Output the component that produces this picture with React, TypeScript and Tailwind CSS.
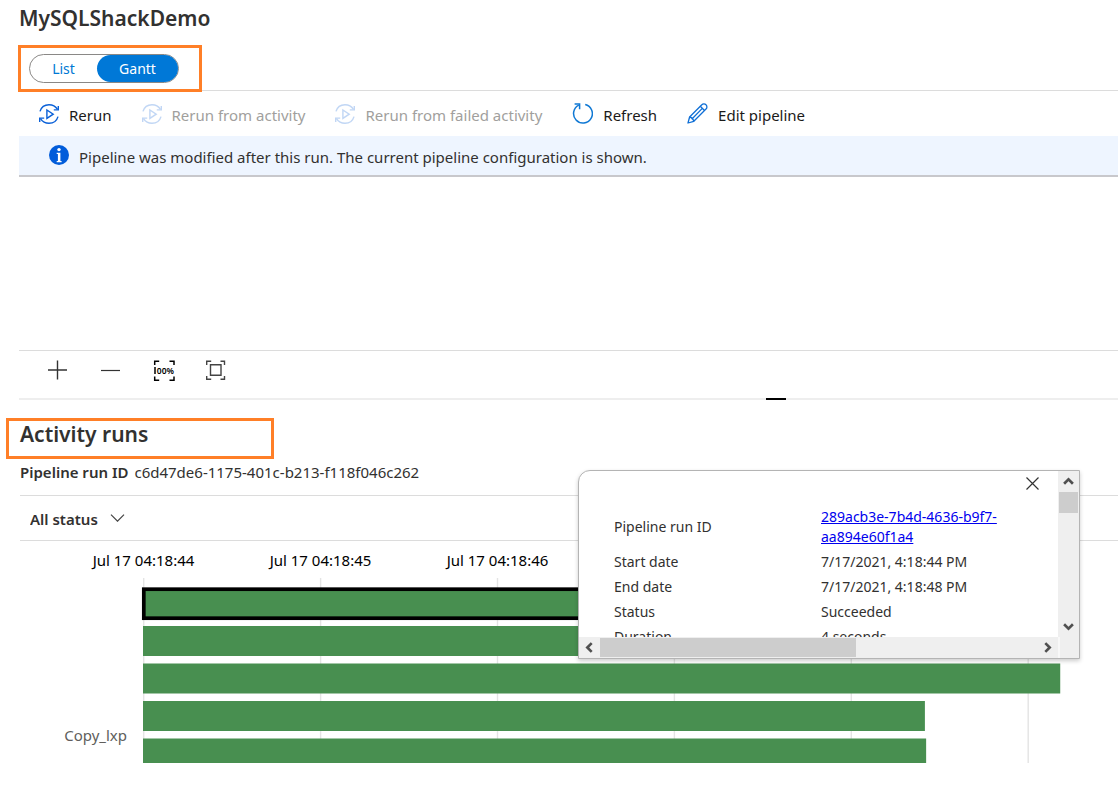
import React from "react";

const SECOND = 176.9;
const CHART_HEIGHT = 185;

const bars = [
  { y: 10, seconds: 4.9 },
  { y: 48, seconds: 4.9 },
  { y: 85.5, seconds: 5.185 },
  { y: 123, seconds: 4.42 },
  { y: 160.5, seconds: 4.427 },
];

const ticks = ["Jul 17 04:18:44", "Jul 17 04:18:45", "Jul 17 04:18:46"];

const details = [
  ["Start date", "7/17/2021, 4:18:44 PM"],
  ["End date", "7/17/2021, 4:18:48 PM"],
  ["Status", "Succeeded"],
  ["Duration", "4 seconds"],
];

function RerunIcon() {
  return (
    <svg className="size-5 shrink-0" viewBox="0 0 20 20" fill="none" stroke="#0b61d8" strokeWidth="1.4" aria-hidden="true">
      <path d="M1 7.400C2.200 3.300 5.900.7 10 .7c3.600 0 6.700 1.800 8.500 4.700" />
      <path d="M19.300 1.900v4h-4.500" />
      <path d="M19 12.600c-1.200 4.100-4.900 6.700-9 6.700-3.600 0-6.700-1.800-8.500-4.700" />
      <path d="M.7 18.100v-4h4.500" />
      <path d="M7.900 6v8.400l6.300-4.200z" />
    </svg>
  );
}

function RefreshIcon() {
  return (
    <svg className="size-[21px] shrink-0" viewBox="0 0 21 21" fill="none" stroke="#0f78d4" strokeWidth="1.5" aria-hidden="true">
      <path d="M13.200 1.500A9.400 9.400 0 1 1 6.800 2.200" />
      <path d="M2.600 1h5v5.200" />
    </svg>
  );
}

function PencilIcon() {
  return (
    <svg className="size-[21px] shrink-0" viewBox="0 0 21 21" fill="none" stroke="#0f6fd6" strokeWidth="1.3" strokeLinejoin="round" aria-hidden="true">
      <path d="M1 20l1.600-6L14.800 1.800a2.900 2.900 0 0 1 4.200 0 2.900 2.900 0 0 1 0 4.200L6.800 18.300z" />
      <path d="M13.300 3.300l4.200 4.200M2.600 14c2 .3 3.600 1.900 4.200 4.300M4.700 16.200L15.300 5.400" />
    </svg>
  );
}

function ToolButton({ icon, label, disabled }: { icon: React.ReactNode; label: string; disabled?: boolean }) {
  return (
    <button type="button" disabled={disabled} className="flex items-center gap-2.5 text-[15px] text-[#1b1a19] disabled:text-[#a19f9d] disabled:[&>svg]:opacity-25">
      {icon}
      <span className="whitespace-nowrap pt-0.5">{label}</span>
    </button>
  );
}

function ScrollArrow({ label, d }: { label: string; d: string }) {
  return (
    <button type="button" aria-label={label} className="grid size-[21px] shrink-0 place-items-center">
      <svg className="size-[11px]" viewBox="0 0 10 10" fill="none" stroke="#505050" strokeWidth="2.4" aria-hidden="true">
        <path d={d} />
      </svg>
    </button>
  );
}

function DetailsPopup() {
  return (
    <section aria-label="Run details" className="absolute top-[470px] left-[578px] grid h-[189px] w-[502px] grid-cols-[1fr_21px] grid-rows-[1fr_21px] overflow-hidden rounded-tl-xl border border-[#b4b4b4] bg-white shadow-[0_2px_4px_rgba(0,0,0,0.2)]">
      <div className="min-h-0 overflow-hidden pl-[35px] text-sm leading-5 text-[#323130]">
        <div className="flex h-[30px] items-end justify-end pr-[19px] pb-[11px]">
          <button type="button" aria-label="Close" className="block">
            <svg className="block size-[13px]" viewBox="0 0 13 13" fill="none" stroke="#333" strokeWidth="1.2" aria-hidden="true">
              <path d="M.5.5l12 12M12.500.5l-12 12" />
            </svg>
          </button>
        </div>
        <dl className="grid grid-cols-[207px_200px] items-center gap-y-[5px] pt-1.5">
          <dt>Pipeline run ID</dt>
          <dd>
            <a href="#run" className="text-[#0000ee] underline">289acb3e-7b4d-4636-b9f7-<br />aa894e60f1a4</a>
          </dd>
          {details.map(([name, value]) => (
            <React.Fragment key={name}>
              <dt>{name}</dt>
              <dd>{value}</dd>
            </React.Fragment>
          ))}
        </dl>
      </div>
      <div className="flex flex-col items-center bg-[#efefef]">
        <ScrollArrow label="Scroll up" d="M1 7l4-4 4 4" />
        <div className="h-[21px] w-[19px] bg-[#cdcdcd]" />
        <div className="grow" />
        <ScrollArrow label="Scroll down" d="M1 3l4 4 4-4" />
      </div>
      <div className="flex items-center bg-[#efefef]">
        <ScrollArrow label="Scroll left" d="M7 1L3 5l4 4" />
        <div className="h-[19px] w-64 bg-[#cdcdcd]" />
        <div className="grow" />
        <ScrollArrow label="Scroll right" d="M3 1l4 4-4 4" />
      </div>
      <div className="border-l-2 border-[#f8f8f8] bg-[#efefef]" />
    </section>
  );
}

export default function App() {
  return (
    <div className="relative min-h-screen overflow-hidden bg-white font-['Noto_Sans','Open_Sans',sans-serif] text-[15px] leading-5 text-[#323130]">
      <main className="pl-[19px]">
        <header className="border-b border-[#dcdcdc] pb-[7px]">
          <h1 className="pt-1 text-[21px] leading-7 font-semibold">MySQLShackDemo</h1>
          <div className="mt-[22px] ml-[10px] inline-flex h-[29px] rounded-full border border-[#8a8886] text-sm align-top">
            <button type="button" aria-pressed="false" className="w-[67px] text-[#0078d4]">List</button>
            <button type="button" aria-pressed="true" className="w-[81px] rounded-full bg-[#0078d7] text-white">Gantt</button>
          </div>
        </header>

        <div className="flex h-[45px] items-center gap-[30px] pl-5">
          <ToolButton icon={<RerunIcon />} label="Rerun" />
          <ToolButton icon={<RerunIcon />} label="Rerun from activity" disabled />
          <ToolButton icon={<RerunIcon />} label="Rerun from failed activity" disabled />
          <ToolButton icon={<RefreshIcon />} label="Refresh" />
          <ToolButton icon={<PencilIcon />} label="Edit pipeline" />
        </div>

        <div role="status" className="flex h-[41px] items-start gap-2.5 border-b-2 border-[#c8c8cc] bg-[#eef5ff] pt-[9px] pl-[30px]">
          <svg className="size-5 shrink-0" viewBox="0 0 20 20" aria-hidden="true">
            <circle cx="10" cy="10" r="10" fill="#015cda" />
            <circle cx="10" cy="4.600" r="1.700" fill="#fff" />
            <path d="M7.700 7.800h3.700v8.200h1.200v1.200H7.700V16h1.200V9H7.700z" fill="#fff" />
          </svg>
          <p className="pt-0.5">Pipeline was modified after this run. The current pipeline configuration is shown.</p>
        </div>

        <div className="h-[173px]" />

        <div className="flex h-[50px] items-start gap-8 border-t border-b-2 border-t-[#dcdcdc] border-b-[#eeeeee] pt-[9px] pl-[28px]">
          <button type="button" aria-label="Zoom in">
            <svg className="size-[21px]" viewBox="0 0 21 21" fill="none" stroke="#333" strokeWidth="1.4" aria-hidden="true">
              <path d="M1 10h19M10.500.5v19" />
            </svg>
          </button>
          <button type="button" aria-label="Zoom out">
            <svg className="size-[21px]" viewBox="0 0 21 21" fill="none" stroke="#333" strokeWidth="1.200" aria-hidden="true">
              <path d="M1 10.500h19" />
            </svg>
          </button>
          <button type="button" aria-label="Zoom to 100%">
            <svg className="size-[21px] overflow-visible" viewBox="0 0 21 21" fill="none" stroke="#000" strokeWidth="1.500" aria-hidden="true">
              <path d="M1.700 5V1.200h4.500M16.500 1.200H21V5M21 16.500v3.800h-4.500M6.200 20.300H1.700v-3.800M2 7v7" />
              <text x="3.800" y="13.500" fontSize="8.500" fontWeight="600" fill="#000" stroke="none">00%</text>
            </svg>
          </button>
          <button type="button" aria-label="Zoom to fit">
            <svg className="size-[21px]" viewBox="0 0 21 21" fill="none" stroke="#444" strokeWidth="1.400" aria-hidden="true">
              <path d="M.7 5V1.200h4.500M14.500 1.200h4V5M18.500 16v3.300h-4M5.200 19.300H.7V16M4.500 4.700h10.500v10.600H4.500z" />
            </svg>
          </button>
        </div>

        <div className="pl-px">
          <h2 className="mt-5 text-[21px] leading-7 font-semibold">Activity runs</h2>
          <p className="flex h-12 items-center gap-1.5 border-b border-[#dcdcdc]">
            <strong className="font-semibold">Pipeline run ID</strong>
            <span>c6d47de6-1175-401c-b213-f118f046c262</span>
          </p>
          <div className="flex h-[45px] items-center gap-3 border-b border-[#dcdcdc] pl-2.5">
            <select aria-label="Status filter" className="appearance-none bg-transparent pt-0.5 font-semibold">
              <option>All status</option>
            </select>
            <svg className="h-2 w-[15px]" viewBox="0 0 15 8" fill="none" stroke="#444" strokeWidth="1.200" aria-hidden="true">
              <path d="M1 .7l6.500 6.500L14 .7" />
            </svg>
          </div>
        </div>
      </main>

      <div className="flex h-[37px] items-center pl-[55px] text-black">
        {ticks.map((tick) => (
          <span key={tick} className="w-[177px] shrink-0 text-center">{tick}</span>
        ))}
      </div>
      <div className="flex">
        <div className="w-[143px] shrink-0 pt-[147px] pr-4 text-right text-[#605e5c]">Copy_lxp</div>
        <svg className="h-[185px] min-w-0 flex-1 overflow-visible" role="img" aria-label="Activity durations">
          {[0, 1, 2, 3, 4, 5].map((i) => (
            <rect key={i} x={i * SECOND} y="0" width="1.400" height={CHART_HEIGHT} fill="#e4e4e4" />
          ))}
          {bars.map((bar) => (
            <rect key={bar.y} x="0" y={bar.y} width={bar.seconds * SECOND} height={Math.min(30, CHART_HEIGHT - bar.y)} fill="#488f50" />
          ))}
          <rect x="0.800" y="11.200" width={4.9 * SECOND} height="29" fill="#488f50" stroke="#000" strokeWidth="3.700" />
        </svg>
      </div>

      <div className="absolute top-[45px] left-[18px] h-[47px] w-[184px] border-3 border-[#ff7f27] pointer-events-none" />
      <div className="absolute top-[418px] left-[6px] h-[41px] w-[268px] border-3 border-[#ff7f27] pointer-events-none" />
      <div className="absolute top-[398px] left-[766px] h-0.5 w-5 bg-black" />
      <DetailsPopup />
    </div>
  );
}
